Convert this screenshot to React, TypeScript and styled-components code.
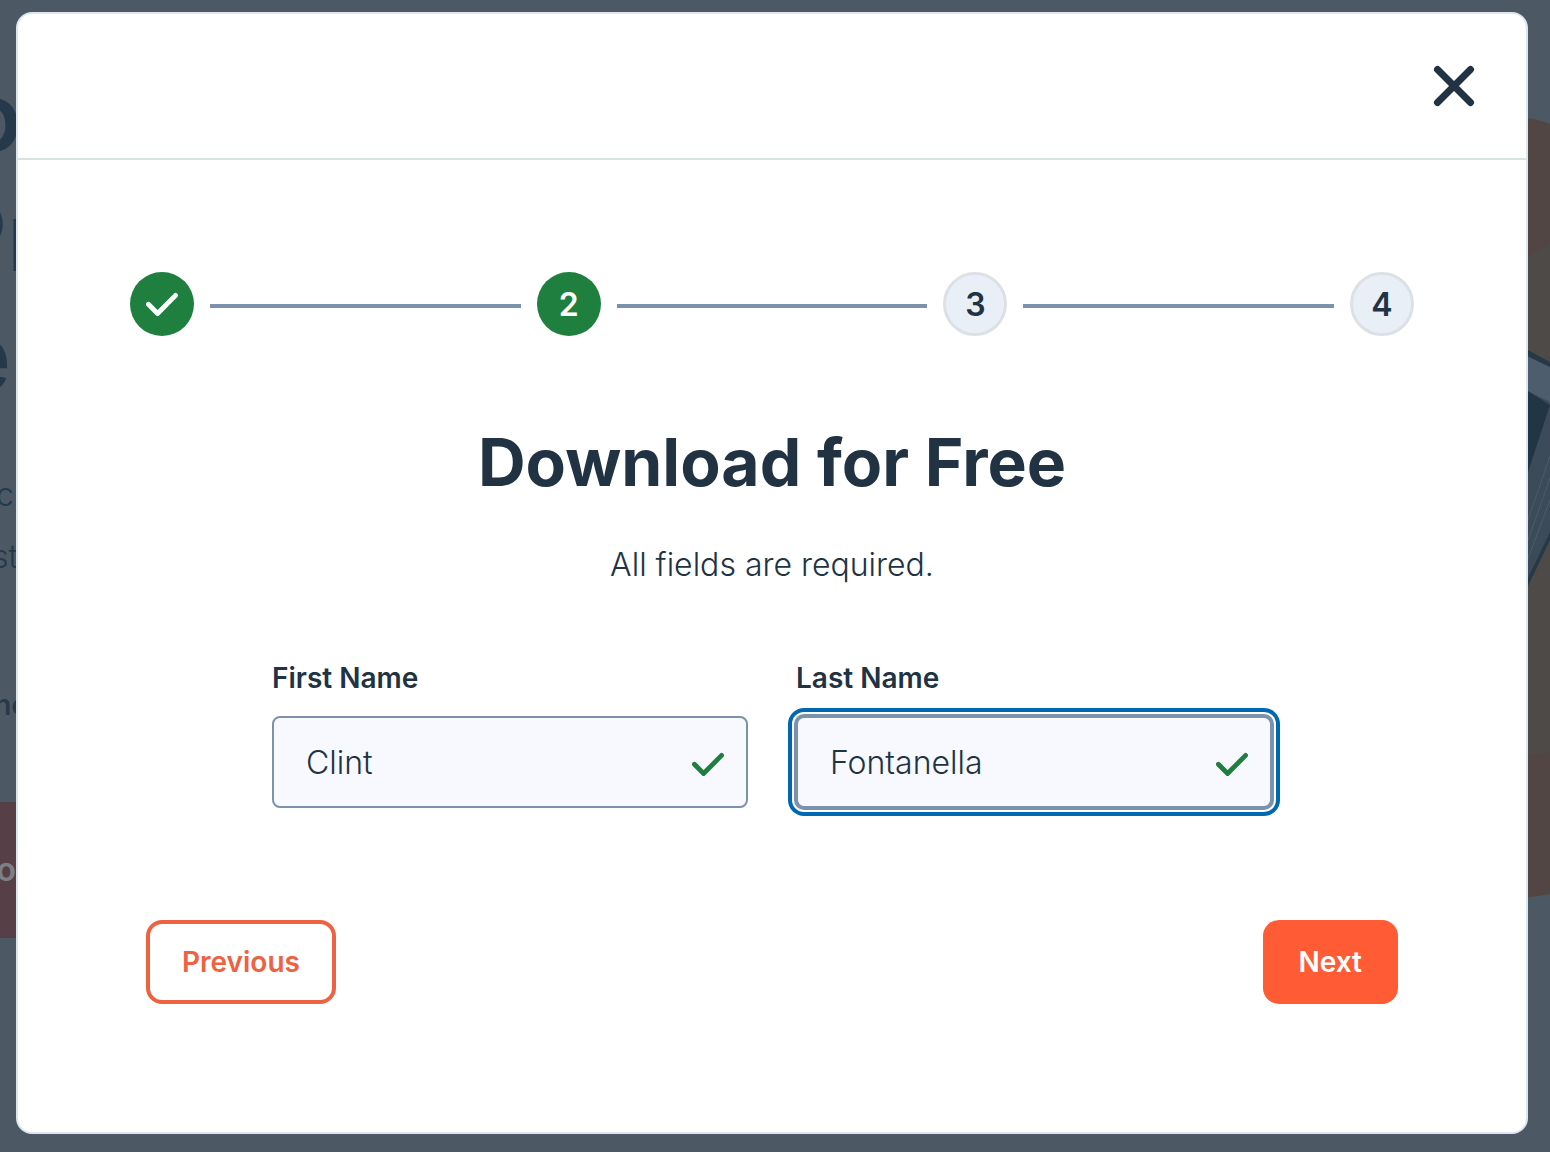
import React from "react";
import styled, { createGlobalStyle, css } from "styled-components";

const color = {
  ink: "#213343",
  backdrop: "#4c5965",
  slate: "#7c92ac",
  green: "#1f7f3f",
  orange: "#ff5c35",
  focus: "#0068b1",
};

const GlobalStyle = createGlobalStyle`
  *, *::before, *::after { box-sizing: border-box; }
  body {
    margin: 0;
    background: ${color.backdrop};
    color: ${color.ink};
    font-family: Inter, "Liberation Sans", sans-serif;
  }
`;

const Screen = styled.div`
  position: relative;
  overflow: hidden;
  padding: 12px 22px 18px 16px;
`;

const PageBehind = styled.div`
  position: absolute;
  inset: 0;
  display: flex;
  justify-content: space-between;
`;

const Copy = styled.div`
  width: 20px;
  padding-top: 56px;
  color: #25394a;
`;

const CopyHeading = styled.div<{ $inset: number }>`
  display: flex;
  justify-content: flex-end;
  margin-right: ${(p) => p.$inset}px;
  font-size: 96px;
  line-height: 120px;
  font-weight: 600;
`;

const CopyText = styled.div<{ $inset: number }>`
  display: flex;
  justify-content: flex-end;
  margin-right: ${(p) => p.$inset}px;
  font-size: 32px;
  line-height: 62px;
  font-weight: 300;
`;

const CopyBlock = styled.div`
  padding-top: 48px;
`;

const CopyStrong = styled(CopyText)`
  font-size: 28px;
  line-height: 138px;
  font-weight: 600;
`;

const CopyButton = styled.div`
  display: flex;
  justify-content: flex-end;
  margin-top: 28px;
  padding-right: 4px;
  background: #573f48;
  color: #7d7f86;
  font-size: 32px;
  line-height: 136px;
  font-weight: 600;
`;

const Artwork = styled.svg`
  display: block;
  width: 24px;
  height: 920px;
`;

const Dialog = styled.section`
  position: relative;
  background: #fff;
  border: 2px solid #dce6ef;
  border-radius: 16px;
`;

const DialogHeader = styled.header`
  display: flex;
  justify-content: flex-end;
  padding: 48px;
  border-bottom: 2px solid #d5e5e2;
`;

const CloseButton = styled.button`
  width: 48px;
  height: 48px;
  padding: 0;
  border: 0;
  background: none;
  color: ${color.ink};

  svg {
    display: block;
  }
`;

const DialogBody = styled.form`
  padding: 112px;
`;

const Steps = styled.ol`
  display: flex;
  align-items: center;
  gap: 16px;
  margin: 0;
  padding: 0;
  list-style: none;
`;

const StepLine = styled.li`
  flex: 1;
  height: 4px;
  margin-top: 4px;
  background: ${color.slate};
`;

const Step = styled.li<{ $active?: boolean }>`
  display: flex;
  align-items: center;
  justify-content: center;
  width: 64px;
  height: 64px;
  border-radius: 50%;
  font-size: 32px;
  font-weight: 600;
  ${(p) =>
    p.$active
      ? css`
          background: ${color.green};
          color: #fff;
        `
      : css`
          background: #e9eff7;
          border: 3px solid #dce1e8;
        `}
`;

const Title = styled.h1`
  margin: 88px 0 0;
  font-size: 66px;
  line-height: 76px;
  font-weight: 700;
  text-align: center;
`;

const Note = styled.p`
  margin: 44px 0 0;
  font-size: 32px;
  line-height: 42px;
  font-weight: 300;
  text-align: center;
`;

const Fields = styled.div`
  display: grid;
  grid-template-columns: 1fr 1fr;
  gap: 48px;
  max-width: 1000px;
  margin: 72px auto 0;
`;

const FieldLabel = styled.label`
  display: block;
  margin-bottom: 18px;
  font-size: 28px;
  line-height: 40px;
  font-weight: 600;
`;

const InputBox = styled.div`
  position: relative;
`;

const TextInput = styled.input<{ $focused?: boolean }>`
  display: block;
  width: 100%;
  height: 92px;
  padding: 0 80px 0 32px;
  border: 2px solid ${color.slate};
  border-radius: 8px;
  outline: none;
  background: #f7f9fe;
  color: ${color.ink};
  font-family: inherit;
  font-size: 32px;
  font-weight: 300;
  ${(p) =>
    p.$focused &&
    css`
      box-shadow:
        0 0 0 2px ${color.slate},
        0 0 0 4px #fff,
        0 0 0 8px ${color.focus};
    `}
`;

const ValidMark = styled.span`
  position: absolute;
  top: 32px;
  right: 24px;
  color: ${color.green};
`;

const CheckSvg = styled.svg`
  display: block;
  width: 32px;
  height: 32px;
`;

const Actions = styled.div`
  display: flex;
  justify-content: space-between;
  margin-top: 96px;
  padding: 16px;
`;

const ActionButton = styled.button<{ $primary?: boolean }>`
  height: 84px;
  padding: 0 32px;
  border: 4px solid ${(p) => (p.$primary ? color.orange : "#ee6141")};
  border-radius: 16px;
  background: ${(p) => (p.$primary ? color.orange : "#fff")};
  color: ${(p) => (p.$primary ? "#fff" : "#ee6141")};
  font-family: inherit;
  font-size: 28px;
  font-weight: 600;
`;

function Check() {
  return (
    <CheckSvg viewBox="0 0 32 32" fill="none" stroke="currentColor" strokeWidth="4.8" strokeLinecap="round" strokeLinejoin="round" aria-hidden="true">
      <path d="M2.400 16.200 11.600 25.500 29.600 7.400" />
    </CheckSvg>
  );
}

interface FieldProps {
  id: string;
  label: string;
  value: string;
  focused?: boolean;
}

function Field({ id, label, value, focused }: FieldProps) {
  return (
    <div>
      <FieldLabel htmlFor={id}>{label}</FieldLabel>
      <InputBox>
        <TextInput id={id} type="text" defaultValue={value} $focused={focused} />
        <ValidMark>
          <Check />
        </ValidMark>
      </InputBox>
    </div>
  );
}

export default function App() {
  return (
    <>
      <GlobalStyle />
      <Screen>
        <PageBehind aria-hidden="true">
          <Copy>
            <CopyHeading $inset={-2}>o</CopyHeading>
            <CopyHeading $inset={-25}>Pr</CopyHeading>
            <CopyHeading $inset={9}>e</CopyHeading>
            <CopyBlock>
              <CopyText $inset={6}>c</CopyText>
              <CopyText $inset={2}>st</CopyText>
            </CopyBlock>
            <CopyBlock>
              <CopyStrong $inset={-8}>ne</CopyStrong>
            </CopyBlock>
            <CopyButton>o</CopyButton>
          </Copy>
          <Artwork viewBox="0 0 24 920">
            <path d="M0 118 Q12 119 24 124V894L0 898Z" fill="#524644" />
            <path d="M0 258 L24 244V752L0 756Z" fill="#4e4a48" />
            <path d="M0 350 24 362V540L0 590Z" fill="#3b4b59" />
            <path d="M0 356 24 367V402L0 390Z" fill="#4d5d6d" />
            <path d="M0 390 24 405 0 478Z" fill="#213545" />
            <path d="M0 349 24 362V367L0 355ZM0 582 24 532V540L0 590Z" fill="#263947" />
            <path d="M0 526 24 456M0 546 24 478M0 564 24 500" stroke="#4b5c6b" />
          </Artwork>
        </PageBehind>
        <Dialog role="dialog" aria-labelledby="dialog-title">
          <DialogHeader>
            <CloseButton type="button" aria-label="Close">
              <svg width="48" height="48" viewBox="0 0 48 48" fill="none" stroke="currentColor" strokeWidth="7" strokeLinecap="round" aria-hidden="true">
                <path d="M7.500 7.500 40.500 40.500M40.500 7.500 7.500 40.500" />
              </svg>
            </CloseButton>
          </DialogHeader>
          <DialogBody onSubmit={(e) => e.preventDefault()}>
            <Steps>
              <Step $active aria-label="Step 1, done">
                <Check />
              </Step>
              <StepLine aria-hidden="true" />
              <Step $active aria-current="step">2</Step>
              <StepLine aria-hidden="true" />
              <Step>3</Step>
              <StepLine aria-hidden="true" />
              <Step>4</Step>
            </Steps>
            <Title id="dialog-title">Download for Free</Title>
            <Note>All fields are required.</Note>
            <Fields>
              <Field id="first-name" label="First Name" value="Clint" />
              <Field id="last-name" label="Last Name" value="Fontanella" focused />
            </Fields>
            <Actions>
              <ActionButton type="button">Previous</ActionButton>
              <ActionButton type="submit" $primary>Next</ActionButton>
            </Actions>
          </DialogBody>
        </Dialog>
      </Screen>
    </>
  );
}
